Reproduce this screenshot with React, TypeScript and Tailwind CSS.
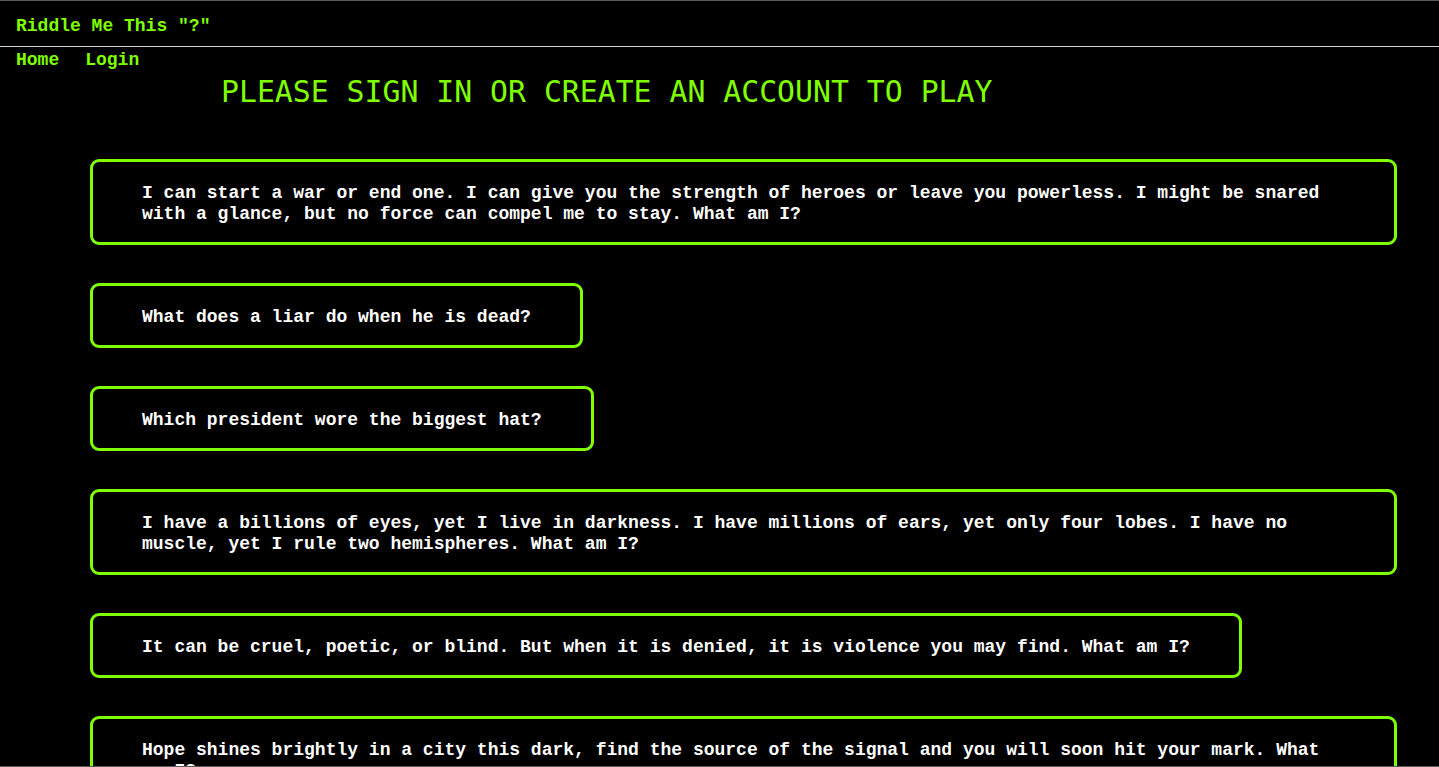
const riddles = [
  'I can start a war or end one. I can give you the strength of heroes or leave you powerless. I might be snared with a glance, but no force can compel me to stay. What am I?',
  'What does a liar do when he is dead?',
  'Which president wore the biggest hat?',
  'I have a billions of eyes, yet I live in darkness. I have millions of ears, yet only four lobes. I have no muscle, yet I rule two hemispheres. What am I?',
  'It can be cruel, poetic, or blind. But when it is denied, it is violence you may find. What am I?',
  'Hope shines brightly in a city this dark, find the source of the signal and you will soon hit your mark. What am I?',
  'The more you take, the more you leave behind. What am I?'
]

function RiddleCard({ text }: { text: string }) {
  return (
    <div className="rounded-[9px] border-[3px] border-[#7fff00] px-[49px] pt-[21px] pb-[17px] text-[18px] leading-[21px] font-bold text-white">
      {text}
    </div>
  )
}

export default function App() {
  return (
    <div className="h-[767px] overflow-hidden border-t border-b border-t-[#5a5a5a] border-b-[#5a5a5a] bg-black font-['Liberation_Mono','Courier_New',monospace]">
      <header className="flex h-[46px] items-center border-b border-[#d4d4d4] px-4 pt-[6px]">
        <span className="text-[18px] font-bold text-[#7fff00]">
          Riddle Me This "?"
        </span>
      </header>

      <nav className="flex px-4 pt-[3px] text-[18px] leading-[21px] font-bold text-[#7fff00]">
        <a className="mr-[26px]">Home</a>
        <a>Login</a>
      </nav>

      <h1 className="mt-[3px] ml-[221px] font-['DejaVu_Sans_Mono',monospace] text-[29.8px] leading-[36px] font-extralight text-[#7fff00]">
        PLEASE SIGN IN OR CREATE AN ACCOUNT TO PLAY
      </h1>

      <main className="mt-[49px] flex flex-col items-start gap-[38px] pr-[42px] pl-[90px]">
        {riddles.map((r) => (
          <RiddleCard key={r} text={r} />
        ))}
      </main>
    </div>
  )
}
